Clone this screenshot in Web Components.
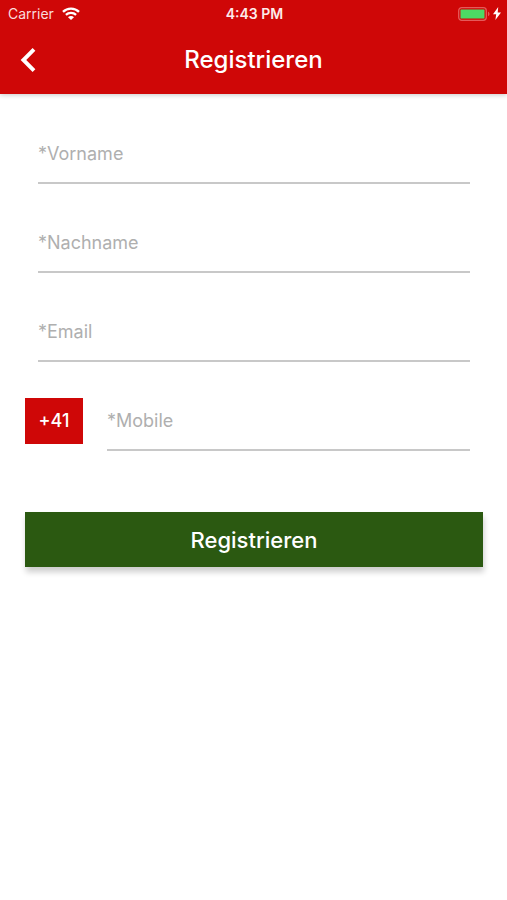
<!DOCTYPE html>
<html lang="de">
<head>
<meta charset="utf-8">
<meta name="viewport" content="width=device-width, initial-scale=1">
<title>Registrieren</title>
<style>
  body {
    margin: 0;
    min-height: 100vh;
    background: #fff;
    font-family: Inter, "Liberation Sans", sans-serif;
    --red: #cf0707;
    --green: #2b5911;
    --line: #c8c8c8;
    --hint: #afafaf;
  }
</style>
</head>
<body>
<register-page></register-page>

<script>
  class BaseElement extends HTMLElement {
    connectedCallback() {
      if (this.shadowRoot) return;
      this.attachShadow({ mode: "open" }).innerHTML =
        "<style>*{box-sizing:border-box}:host{box-sizing:border-box}</style>" + this.render();
    }
  }

  customElements.define("status-bar", class extends BaseElement {
    render() {
      return `
      <style>
        :host { display: grid; grid-template-columns: 1fr auto 1fr; align-items: center;
          height: 27px; padding: 0 6px 0 8px; color: #fff; font-size: 14px; line-height: 20px; }
        .left, .right { display: flex; align-items: center; }
        .left { gap: 8px; color: #f9dcdc; }
        .right { justify-content: flex-end; gap: 3px; }
        .time { font-size: 14px; font-weight: 600; color: #fdeaea; }
        svg { display: block; }
      </style>
      <div class="left"><span>Carrier</span>
        <svg width="18" height="13" viewBox="0 0 18 13" fill="none" stroke="#fff" stroke-width="2.3" aria-hidden="true">
          <path d="M1 4.9C5.3.6 12.7.6 17 4.9"/>
          <path d="M3.9 7.9c2.8-2.6 7.4-2.6 10.2 0"/>
          <path d="M6 10.2c1.6-1.6 4.4-1.6 6 0L9 13z" fill="#fff" stroke="none"/>
        </svg>
      </div>
      <span class="time">4:43 PM</span>
      <div class="right">
        <svg width="32" height="14" viewBox="0 0 32 14" aria-hidden="true">
          <rect x=".7" y=".7" width="27.6" height="12.6" rx="3" fill="none" stroke="#e55a5a" stroke-width="1.3"/>
          <rect x="2.5" y="2.5" width="24" height="9" rx=".6" fill="#4cd964"/>
          <path d="M30 4.8c2 .7 2 3.7 0 4.4z" fill="#e55a5a"/>
        </svg>
        <svg width="8" height="13" viewBox="0 0 8 13" aria-hidden="true">
          <path d="M5.2 0L0 7.2h3.2L2.4 13 8 5.5H4.7z" fill="#fff"/>
        </svg>
      </div>`;
    }
  });

  customElements.define("nav-bar", class extends BaseElement {
    render() {
      return `
      <style>
        :host { display: grid; grid-template-columns: 56px 1fr 56px; align-items: center;
          height: 67px; padding-bottom: 2px; color: #fff; }
        h1 { margin: 0; text-align: center; font-size: 24px; line-height: 32px; font-weight: 500; }
        button { display: flex; align-items: center; justify-content: center; width: 56px; height: 48px;
          padding: 0; border: 0; background: none; color: inherit; cursor: pointer; }
      </style>
      <button type="button" aria-label="Zurück">
        <svg width="16" height="26" viewBox="0 0 16 26" fill="none" stroke="currentColor" stroke-width="3.9" aria-hidden="true">
          <path d="M14 2.4L3.4 13 14 23.6"/>
        </svg>
      </button>
      <h1><slot></slot></h1>`;
    }
  });

  customElements.define("text-field", class extends BaseElement {
    render() {
      const hint = this.getAttribute("hint");
      const type = this.getAttribute("type") || "text";
      return `
      <style>
        :host { display: block; flex: 1; min-width: 0; }
        input { display: block; width: 100%; height: 61px; margin: 0; padding: 2px 0 0; border: 0;
          border-bottom: 2px solid var(--line); border-radius: 0; outline: 0; background: none;
          font: 18px/24px Inter, "Liberation Sans", sans-serif; color: #333; }
        input::placeholder { color: var(--hint); opacity: 1; }
      </style>
      <input type="${type}" placeholder="*${hint}" aria-label="${hint}" required>`;
    }
  });

  customElements.define("country-code", class extends BaseElement {
    render() {
      return `
      <style>
        :host { display: block; }
        button { display: block; width: 58px; height: 46px; padding: 0; border: 0; background: var(--red);
          color: #fff; font: 500 18px/24px Inter, "Liberation Sans", sans-serif; cursor: pointer; }
      </style>
      <button type="button"><slot></slot></button>`;
    }
  });

  customElements.define("submit-button", class extends BaseElement {
    render() {
      return `
      <style>
        :host { display: block; }
        button { display: block; width: 100%; height: 55px; padding: 0; border: 0; background: var(--green);
          color: #fff; font: 500 22px/28px Inter, "Liberation Sans", sans-serif; cursor: pointer;
          box-shadow: 1px 5px 6px rgba(0, 0, 0, .2); }
      </style>
      <button type="button"><slot></slot></button>`;
    }
  });

  customElements.define("register-page", class extends BaseElement {
    render() {
      return `
      <style>
        :host { display: block; }
        header { background: var(--red); box-shadow: 0 1px 5px rgba(0, 0, 0, .22); }
        form { padding: 29px 24px 0 25px; }
        .fields { display: flex; flex-direction: column; gap: 28px; padding: 0 13px; }
        .phone { display: flex; align-items: center; gap: 24px; padding-right: 13px; margin: 28px 0 61px; }
      </style>
      <header>
        <status-bar></status-bar>
        <nav-bar>Registrieren</nav-bar>
      </header>
      <form>
        <div class="fields">
          <text-field hint="Vorname"></text-field>
          <text-field hint="Nachname"></text-field>
          <text-field hint="Email" type="email"></text-field>
        </div>
        <div class="phone">
          <country-code>+41</country-code>
          <text-field hint="Mobile" type="tel"></text-field>
        </div>
        <submit-button>Registrieren</submit-button>
      </form>`;
    }
  });
</script>
</body>
</html>
